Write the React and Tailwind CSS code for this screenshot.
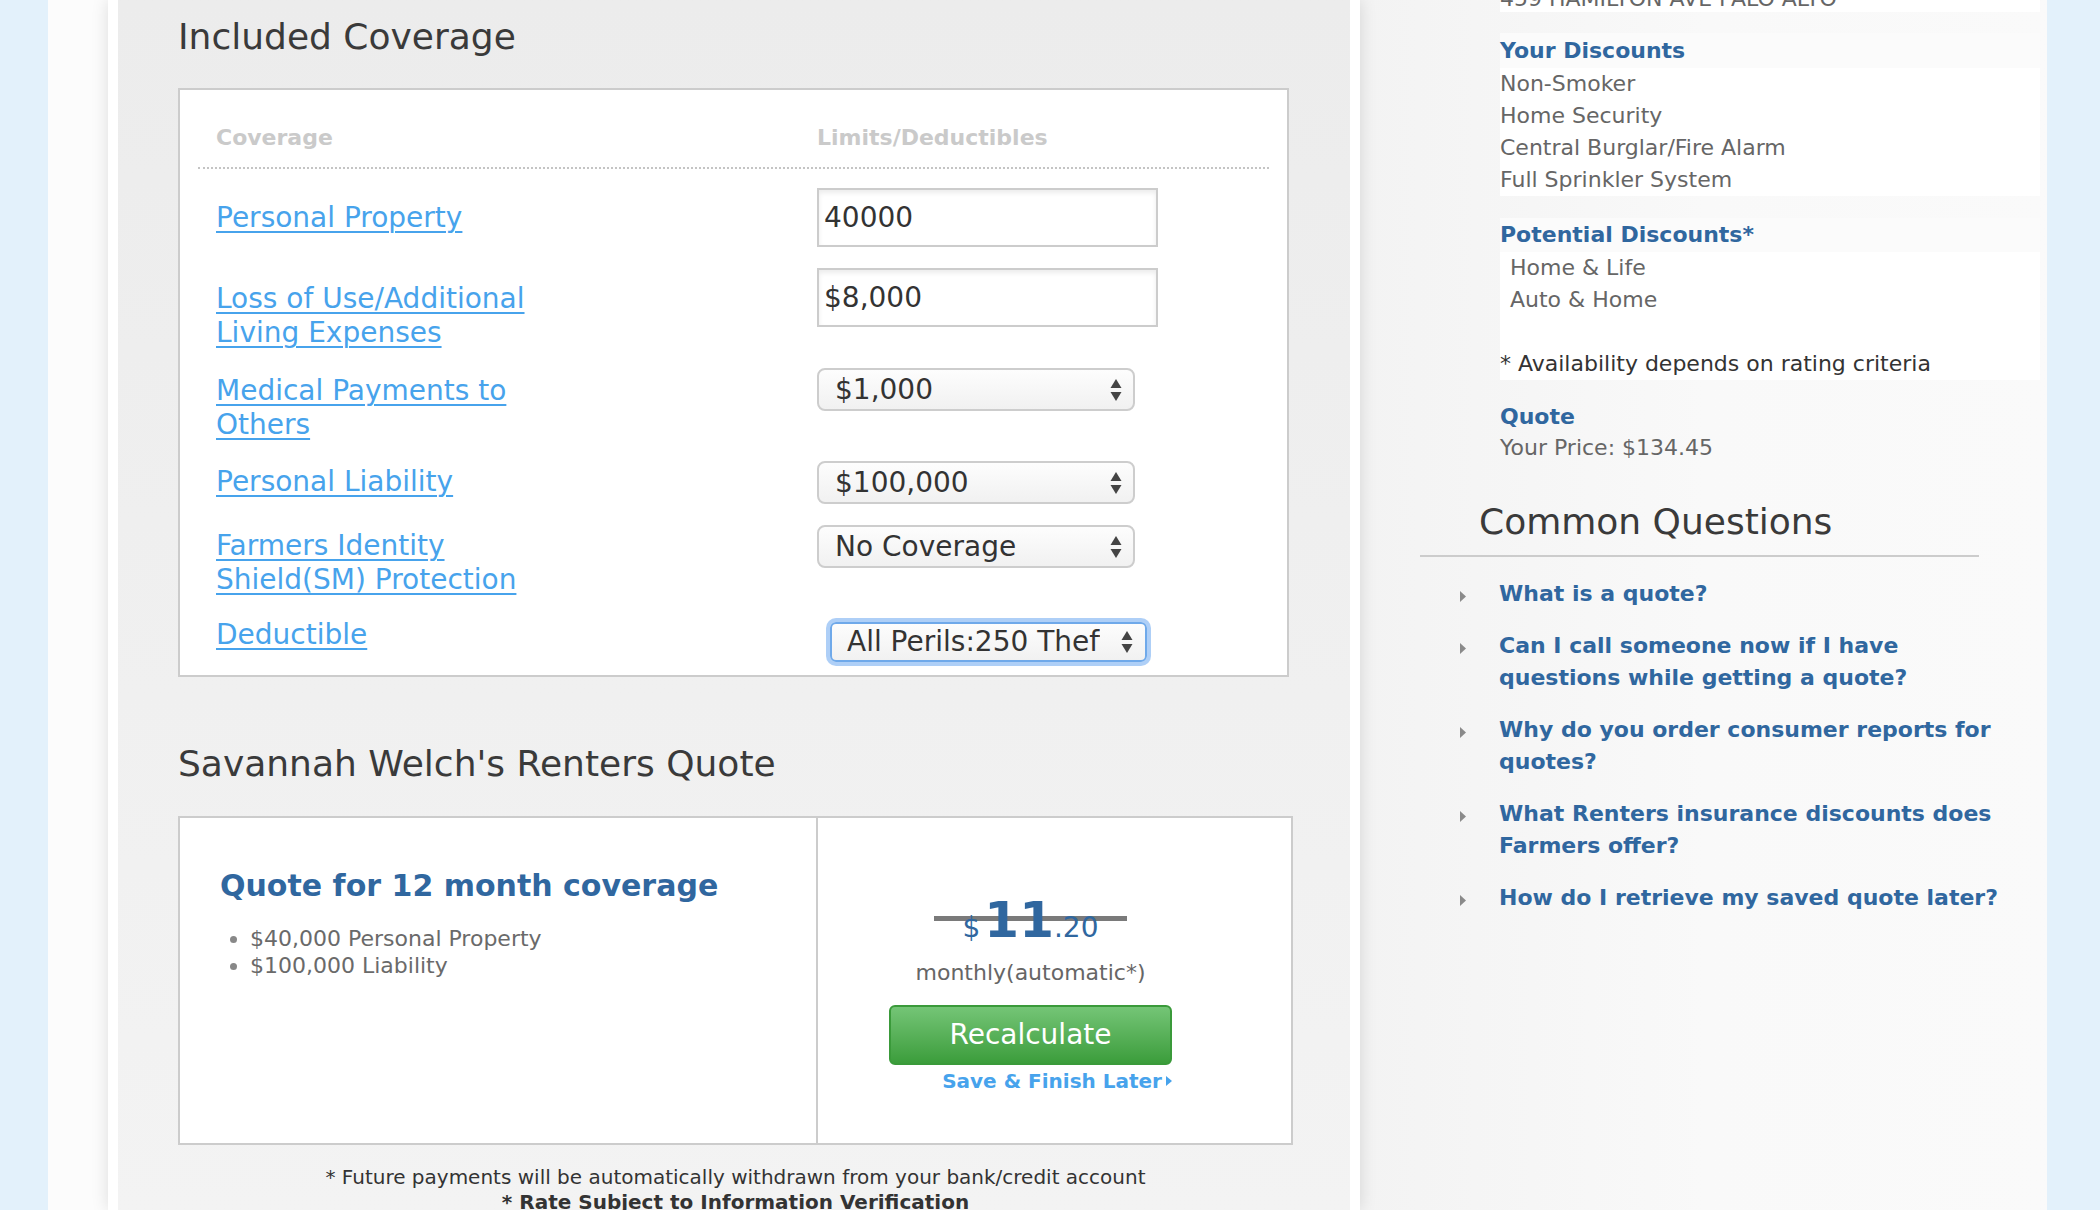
import React from "react";

const SelectArrows = () => (
  <svg width="12" height="24" viewBox="0 0 12 24" className="shrink-0">
    <polygon points="6,1 11.5,10 0.5,10" fill="#444" />
    <polygon points="0.5,14 11.5,14 6,23" fill="#444" />
  </svg>
);

const TextBox = ({ value }) => (
  <input
    readOnly
    defaultValue={value}
    className="w-[341px] h-[59px] border-2 border-[#cccccc] bg-white shadow-[inset_0_3px_5px_rgba(0,0,0,0.08)] pl-[5px] text-[28px] text-[#333] outline-none"
  />
);

const FakeSelect = ({ value }) => (
  <div className="w-[318px] h-[43px] rounded-[8px] border-2 border-[#cdcdcd] bg-gradient-to-b from-[#fdfdfd] to-[#f1f1f1] flex items-center justify-between pl-[16px] pr-[11px] text-[28px] text-[#333]">
    <span>{value}</span>
    <SelectArrows />
  </div>
);

const CoverageLink = ({ lines, pad }) => (
  <div className={`w-[601px] shrink-0 ${pad}`}>
    <a
      href="#"
      className="text-[28px] leading-[34px] text-[#47a3ec] underline decoration-2 underline-offset-[4px]"
    >
      {lines.map((l, i) => (
        <React.Fragment key={i}>
          {i > 0 && <br />}
          {l}
        </React.Fragment>
      ))}
    </a>
  </div>
);

const questions = [
  ["What is a quote?"],
  ["Can I call someone now if I have", "questions while getting a quote?"],
  ["Why do you order consumer reports for", "quotes?"],
  ["What Renters insurance discounts does", "Farmers offer?"],
  ["How do I retrieve my saved quote later?"],
];

export default function App() {
  return (
    <div className="h-[1210px] overflow-hidden bg-[#e3f1fb] font-['DejaVu_Sans',Verdana,sans-serif]">
      <div className="ml-[48px] w-[1999px] h-full flex">
        {/* left gutter */}
        <div className="w-[60px] h-full bg-[#fcfcfc]" />

        {/* main column */}
        <main className="relative z-10 w-[1252px] h-full border-x-[10px] border-white bg-gradient-to-b from-[#ececec] to-[#f3f3f3] shadow-[0_0_16px_rgba(0,0,0,0.13)] pl-[60px] pt-[15px]">
          <h2 className="text-[36px] leading-[44px] text-[#3a3a3a]">Included Coverage</h2>

          <div className="mt-[29px] w-[1111px] border-2 border-[#cccccc] bg-white">
            <div className="px-[18px]">
              <div className="flex pt-[35px] pb-[16px] border-b-2 border-dotted border-[#c4c4c4] text-[22px] leading-[26px] font-bold text-[#cacaca]">
                <div className="w-[619px] pl-[18px]">Coverage</div>
                <div>Limits/Deductibles</div>
              </div>
            </div>

            <div className="flex flex-col gap-[20px] pl-[36px] pt-[19px] pb-[13px]">
              <div className="flex items-start h-[60px]">
                <CoverageLink lines={["Personal Property"]} pad="pt-[13px]" />
                <TextBox value="40000" />
              </div>
              <div className="flex items-start h-[80px]">
                <CoverageLink lines={["Loss of Use/Additional", "Living Expenses"]} pad="pt-[14px]" />
                <TextBox value="$8,000" />
              </div>
              <div className="flex items-start h-[73px]">
                <CoverageLink lines={["Medical Payments to", "Others"]} pad="pt-[6px]" />
                <FakeSelect value="$1,000" />
              </div>
              <div className="flex items-start h-[44px]">
                <CoverageLink lines={["Personal Liability"]} pad="pt-[4px]" />
                <FakeSelect value="$100,000" />
              </div>
              <div className="flex items-start h-[71px]">
                <CoverageLink lines={["Farmers Identity", "Shield(SM) Protection"]} pad="pt-[4px]" />
                <FakeSelect value="No Coverage" />
              </div>
              <div className="flex items-start">
                <CoverageLink lines={["Deductible"]} pad="pt-[2px]" />
                <div className="ml-[13px] mt-[6px] w-[317px] h-[40px] rounded-[6px] border-2 border-[#6fa9ea] bg-gradient-to-b from-[#fdfdfd] to-[#f1f1f1] shadow-[0_0_0_4px_rgba(130,182,242,0.65)] flex items-center justify-between pl-[15px] pr-[12px] text-[28px] text-[#333]">
                  <span className="w-[253px] overflow-hidden whitespace-nowrap">All Perils:250 Theft:500</span>
                  <SelectArrows />
                </div>
              </div>
            </div>
          </div>

          <h2 className="mt-[65px] text-[36px] leading-[44px] text-[#3a3a3a]">Savannah Welch's Renters Quote</h2>

          <div className="mt-[30px] w-[1115px] h-[329px] border-2 border-[#cccccc] bg-white flex">
            <div className="w-[638px] border-r-2 border-[#cccccc] pl-[40px] pt-[50px]">
              <h3 className="text-[30px] leading-[36px] font-bold text-[#30679f]">Quote for 12 month coverage</h3>
              <ul className="mt-[21px] list-disc pl-[30px] text-[22px] leading-[27px] text-[#6a6a6a] marker:text-[#888]">
                <li>$40,000 Personal Property</li>
                <li>$100,000 Liability</li>
              </ul>
            </div>
            <div className="flex-1 flex flex-col items-center pr-[48px] pt-[77px]">
              <div className="relative px-[29px] leading-[50px] text-[#30679f] whitespace-nowrap">
                <div className="absolute left-0 right-0 top-[21px] h-[5px] bg-[#7a7a7a]" />
                <span className="relative text-[28px] mr-[4px]">$</span>
                <span className="relative text-[50px] font-bold">11</span>
                <span className="relative text-[28px]">.20</span>
              </div>
              <div className="mt-[2px] text-[22px] leading-[28px] text-[#666]">monthly(automatic*)</div>
              <div className="w-[283px] mt-[18px]">
                <button className="w-full h-[60px] rounded-[6px] border-2 border-[#3a9a3a] bg-gradient-to-b from-[#74c576] to-[#3b9d3b] text-white text-[28px]">
                  Recalculate
                </button>
                <a href="#" className="mt-[4px] flex items-center justify-end gap-[4px] text-[20px] leading-[24px] font-bold text-[#47a3ec]">
                  Save &amp; Finish Later
                  <svg width="6" height="10" viewBox="0 0 6 10">
                    <polygon points="0,0 6,5 0,10" fill="#47a3ec" />
                  </svg>
                </a>
              </div>
            </div>
          </div>

          <div className="w-[1115px] mt-[20px] text-center text-[20px] leading-[25px] text-[#333]">
            <p>* Future payments will be automatically withdrawn from your bank/credit account</p>
            <p className="font-bold">* Rate Subject to Information Verification</p>
          </div>
        </main>

        {/* sidebar */}
        <aside className="flex-1 h-full bg-gradient-to-r from-[#f3f3f3] via-[#f9f9f9] to-[#fafafa] pl-[140px] pr-[7px] text-[22px]">
          <div className="-mt-[14px] bg-white leading-[26px] text-[#666]">459 HAMILTON AVE PALO ALTO</div>

          <div className="mt-[21px] bg-[#fbfbfb] leading-[35px] font-bold text-[#30679f]">Your Discounts</div>
          <div className="bg-white leading-[32px] text-[#666]">
            <div>Non-Smoker</div>
            <div>Home Security</div>
            <div>Central Burglar/Fire Alarm</div>
            <div>Full Sprinkler System</div>
          </div>

          <div className="mt-[22px] bg-[#fbfbfb] leading-[34px] font-bold text-[#30679f]">Potential Discounts*</div>
          <div className="bg-white leading-[32px] text-[#666]">
            <div className="pl-[10px]">Home &amp; Life</div>
            <div className="pl-[10px]">Auto &amp; Home</div>
            <div className="h-[32px]" />
            <div className="text-[#333]">* Availability depends on rating criteria</div>
          </div>

          <div className="mt-[21px] leading-[32px] font-bold text-[#30679f]">Quote</div>
          <div className="leading-[30px] text-[#666]">Your Price: $134.45</div>

          <div className="-ml-[80px] w-[559px] mt-[37px]">
            <h2 className="pl-[59px] text-[36px] leading-[44px] text-[#3a3a3a]">Common Questions</h2>
            <div className="mt-[11px] h-[2px] bg-[#cccccc]" />
            <div className="mt-[21px] flex flex-col gap-[20px]">
              {questions.map((q, i) => (
                <div key={i} className="flex items-start">
                  <div className="w-[79px] shrink-0 flex justify-end pr-[33px] pt-[13px]">
                    <svg width="6" height="11" viewBox="0 0 6 11">
                      <polygon points="0,0 6,5.5 0,11" fill="#8a8a8a" />
                    </svg>
                  </div>
                  <a href="#" className="leading-[32px] font-bold text-[#30679f] whitespace-nowrap">
                    {q.map((l, j) => (
                      <React.Fragment key={j}>
                        {j > 0 && <br />}
                        {l}
                      </React.Fragment>
                    ))}
                  </a>
                </div>
              ))}
            </div>
          </div>
        </aside>
      </div>
    </div>
  );
}
